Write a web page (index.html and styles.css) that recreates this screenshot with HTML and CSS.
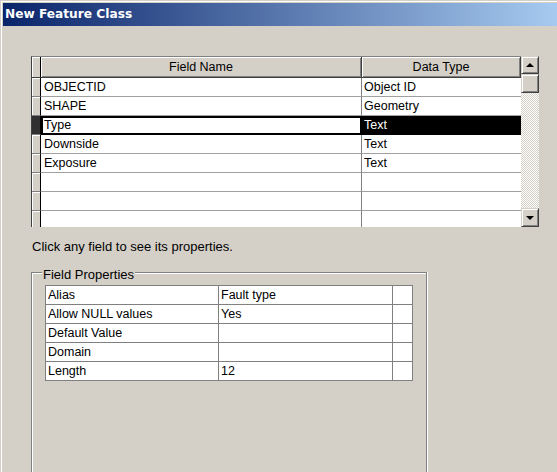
FILE: index.html
```html
<!DOCTYPE html>
<html>
<head>
<meta charset="utf-8">
<link rel="stylesheet" href="styles.css">
</head>
<body>
<div class="window">
  <div class="titlebar">New Feature Class</div>
  <div class="content">
    <div class="fieldgrid">
      <div class="grid">
        <div class="row head">
          <div class="rh"></div>
          <div class="hc">Field Name</div>
          <div class="hc">Data Type</div>
        </div>
        <div class="row"><div class="rh"></div><div class="c name">OBJECTID</div><div class="c type">Object ID</div></div>
        <div class="row"><div class="rh"></div><div class="c name">SHAPE</div><div class="c type">Geometry</div></div>
        <div class="row sel"><div class="rh"></div><div class="c name">Type</div><div class="c type">Text</div></div>
        <div class="row"><div class="rh"></div><div class="c name">Downside</div><div class="c type">Text</div></div>
        <div class="row"><div class="rh"></div><div class="c name">Exposure</div><div class="c type">Text</div></div>
        <div class="row"><div class="rh"></div><div class="c name"></div><div class="c type"></div></div>
        <div class="row"><div class="rh"></div><div class="c name"></div><div class="c type"></div></div>
        <div class="row"><div class="rh"></div><div class="c name"></div><div class="c type"></div></div>
        <div class="row"><div class="rh"></div><div class="c name"></div><div class="c type"></div></div>
      </div>
      <div class="vscroll">
        <div class="sbtn up"><span class="tri-up"></span></div>
        <div class="thumb"></div>
        <div class="track"></div>
        <div class="sbtn down"><span class="tri-down"></span></div>
      </div>
    </div>
    <p class="hint">Click any field to see its properties.</p>
    <fieldset class="group">
      <legend>Field Properties</legend>
      <table class="props">
        <tr><td class="k">Alias</td><td class="v">Fault type</td><td class="x"></td></tr>
        <tr><td class="k">Allow NULL values</td><td class="v">Yes</td><td class="x"></td></tr>
        <tr><td class="k">Default Value</td><td class="v"></td><td class="x"></td></tr>
        <tr><td class="k">Domain</td><td class="v"></td><td class="x"></td></tr>
        <tr><td class="k">Length</td><td class="v">12</td><td class="x"></td></tr>
      </table>
    </fieldset>
  </div>
</div>
</body>
</html>
```
FILE: styles.css
```css
html, body {
  margin: 0;
  background: #d4d0c8;
}
body {
  font-family: "Liberation Sans", Arial, sans-serif;
  color: #000;
}
.window {
  height: 472px;
  overflow: hidden;
  box-sizing: border-box;
  padding: 3px 0 0 3px;
  box-shadow: inset 1px 1px 0 #d4d0c8, inset 2px 2px 0 #fff;
}
.titlebar {
  height: 23px;
  line-height: 23px;
  padding-left: 2px;
  background: linear-gradient(to right, #0a246a, #a6caf0);
  color: #fff;
  font-family: "DejaVu Sans", sans-serif;
  font-weight: bold;
  font-size: 12.2px;
  white-space: nowrap;
}
.content {
  padding: 30px 0 0 28px;
}
.fieldgrid {
  display: flex;
  height: 171px;
}
.grid {
  width: 490px;
  height: 171px;
  overflow: hidden;
  box-sizing: border-box;
  border-top: 1px solid #808080;
  border-left: 1px solid #404040;
  background: #fff;
}
.row {
  display: grid;
  grid-template-columns: 9px 321px 159px;
  height: 19px;
}
.row.head {
  height: 21px;
}
.row > div {
  box-sizing: border-box;
}
.rh {
  background: #d4d0c8;
  border-right: 1px solid #000;
  border-bottom: 1px solid #808080;
  box-shadow: inset 1px 1px 0 #fff;
}
.head .rh {
  border-bottom-color: #404040;
}
.hc {
  background: #d4d0c8;
  border-right: 1px solid #404040;
  border-bottom: 1px solid #404040;
  box-shadow: inset 1px 1px 0 #fff, inset -1px -1px 0 #808080;
  text-align: center;
  font-size: 12.5px;
  line-height: 20px;
  white-space: nowrap;
}
.c {
  background: #fff;
  border-bottom: 1px solid #a0a0a0;
  font-size: 12.5px;
  line-height: 18px;
  white-space: nowrap;
  overflow: hidden;
}
.name {
  padding-left: 3px;
  border-right: 1px solid #808080;
}
.type {
  padding-left: 2px;
}
.sel .rh {
  background: #303030;
  box-shadow: none;
}
.sel .name {
  outline: 2px solid #000;
  outline-offset: -2px;
}
.sel .type {
  background: #000;
  color: #fff;
  border-bottom-color: #000;
}
.vscroll {
  width: 18px;
  height: 171px;
  display: flex;
  flex-direction: column;
}
.sbtn, .thumb {
  box-sizing: border-box;
  background: #d4d0c8;
  border: 1px solid;
  border-color: #d4d0c8 #404040 #404040 #d4d0c8;
  box-shadow: inset 1px 1px 0 #fff, inset -1px -1px 0 #808080;
}
.sbtn {
  height: 18px;
  display: flex;
  align-items: center;
  justify-content: center;
}
.sbtn.down {
  height: 19px;
}
.thumb {
  height: 19px;
}
.track {
  flex: 1;
  background: repeating-conic-gradient(#fff 0 25%, #d4d0c8 0 50%) 0 0 / 2px 2px;
}
.tri-up, .tri-down {
  width: 0;
  height: 0;
  border-left: 4px solid transparent;
  border-right: 4px solid transparent;
}
.tri-up {
  border-bottom: 4px solid #000;
}
.tri-down {
  border-top: 4px solid #000;
}
.hint {
  margin: 12px 0 0 1px;
  font-size: 13px;
  line-height: 15px;
}
.group {
  margin: 9px 0 0 0;
  width: 396px;
  height: 300px;
  box-sizing: border-box;
  min-width: 0;
  padding: 3px 10px 0 13px;
  border: 1px solid #808080;
  box-shadow: inset 1px 1px 0 #fff, 1px 0 0 #fff;
}
.group legend {
  padding: 4px 1px 0 1px;
  margin-left: -3px;
  font-size: 13px;
  line-height: 15px;
  background: #d4d0c8;
}
.props {
  border-collapse: separate;
  border-spacing: 0;
  table-layout: fixed;
  width: 368px;
  background: #fff;
  border-top: 1px solid #808080;
  border-left: 1px solid #808080;
  font-size: 12.5px;
}
.props td {
  box-sizing: border-box;
  height: 19px;
  padding: 0 0 0 2px;
  line-height: 18px;
  border-right: 1px solid #808080;
  border-bottom: 1px solid #808080;
  white-space: nowrap;
  overflow: hidden;
}
.props .k { width: 173px; }
.props .v { width: 174px; }
.props .x { width: 20px; }
```
